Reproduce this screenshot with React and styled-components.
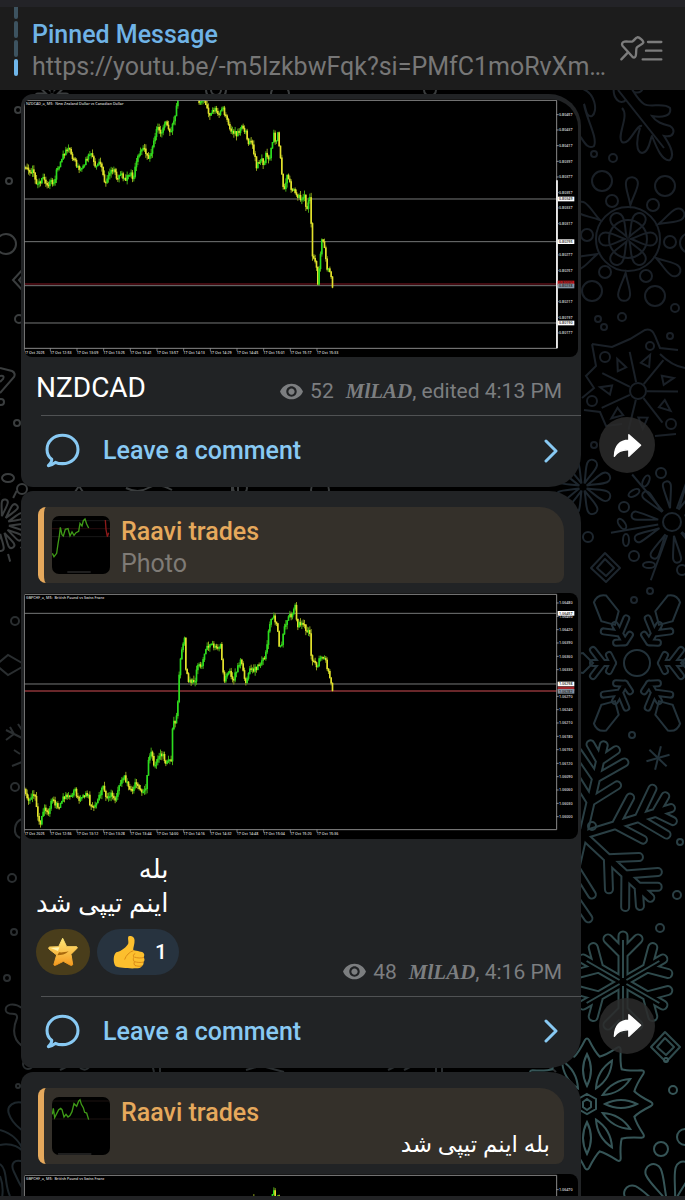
import React from 'react';
import styled, { createGlobalStyle } from 'styled-components';
import { MdVisibility } from 'react-icons/md';

const GlobalStyle = createGlobalStyle`
  * {
    box-sizing: border-box;
  }

  body {
    margin: 0;
    background: #000;
    font-family: Roboto, 'Noto Sans', 'DejaVu Sans', sans-serif;
  }

  button {
    font: inherit;
    border: 0;
    padding: 0;
    background: none;
    cursor: pointer;
  }
`;

// chart data: [x, y] turning points of the price
const nzdPath = [
  [72, 235], [100, 245], [110, 285], [130, 262], [145, 285], [152, 262],
  [160, 292], [170, 245], [190, 190], [208, 175], [220, 205], [240, 240],
  [255, 215], [275, 188], [285, 228], [302, 215], [315, 278], [330, 243],
  [345, 240], [352, 270], [365, 248], [375, 268], [395, 250], [400, 268],
  [412, 205], [432, 165], [443, 205], [455, 185], [472, 105], [482, 135],
  [495, 92], [512, 122], [525, 85], [534, 20], [560, -60], [590, -20],
  [597, 40], [612, 30], [630, 72], [645, 55], [660, 70], [668, 50],
  [690, 115], [710, 132], [725, 113], [738, 120], [745, 162], [755, 145],
  [770, 228], [785, 208], [790, 228], [800, 185], [808, 212], [822, 135],
  [828, 155], [835, 130], [852, 312], [862, 255], [875, 295], [905, 328],
  [915, 320], [920, 358], [931, 318], [937, 490], [950, 530], [952, 600],
  [959, 530], [965, 450], [972, 455], [980, 528], [992, 550], [998, 592],
];

const gbpPath = [
  [72, 625], [84, 665], [92, 648], [106, 650], [112, 700], [120, 732],
  [134, 682], [146, 695], [155, 658], [175, 682], [190, 648], [210, 650],
  [225, 630], [237, 660], [250, 642], [265, 645], [270, 675], [282, 682],
  [295, 655], [310, 618], [320, 650], [335, 640], [345, 662], [358, 620],
  [372, 583], [385, 620], [395, 632], [408, 610], [425, 635], [440, 620],
  [446, 535], [455, 510], [462, 555], [475, 535], [490, 518], [498, 552],
  [508, 530], [515, 538], [519, 420], [528, 432], [535, 350], [539, 265],
  [548, 195], [556, 175], [558, 265], [568, 305], [585, 305], [592, 248],
  [605, 262], [620, 200], [632, 188], [645, 200], [662, 195], [672, 300],
  [690, 272], [700, 302], [710, 270], [722, 240], [738, 305], [752, 260],
  [765, 268], [785, 250], [798, 220], [808, 135], [820, 110], [832, 130],
  [836, 190], [844, 202], [852, 150], [866, 110], [880, 100], [886, 75],
  [892, 135], [905, 128], [920, 148], [930, 160], [934, 230], [952, 262],
  [960, 232], [976, 235], [988, 285], [998, 332],
];

const gbpLatePath = [
  [72, 900], [700, 820], [750, 425], [758, 410], [766, 440], [808, 428],
  [818, 400], [824, 392], [828, 420], [834, 410], [838, 470], [998, 800],
];

const timeMarks = first => first.map((t, i) => [72 + i * 80 - (i ? 2 : 0), `17 Oct ${t}`]);

const nzdChart = {
  title: 'NZDCAD_o, M5:  New Zealand Dollar vs Canadian Dollar',
  box: '72 26 1662 775',
  top: 30,
  bottom: 774,
  path: nzdPath,
  lines: [326, 454, 586, 698],
  bid: 581,
  bidColor: '#5a1118',
  thickAxis: 270,
  marks: timeMarks(['2025', '12:53', '13:09', '13:25', '13:41', '13:57', '14:13', '14:29', '14:45', '15:01', '15:17', '15:33']),
  scale: [
    [73, '0.80457'], [119, '0.80437'], [166, '0.80417'], [213, '0.80397'],
    [260, '0.80377'], [307, '0.80357'], [353, '0.80337'], [400, '0.80317'],
    [494, '0.80277'], [541, '0.80257'], [634, '0.80217'], [681, '0.80197'],
    [728, '0.80177'],
  ],
  tags: [
    [326, '0.80349', '#fff'], [454, '0.80295', '#fff'], [578, '0.80241', '#c4161c'],
    [587, '0.80238', '#8291a0'], [698, '0.80190', '#fff'],
  ],
};

const gbpChart = {
  title: 'GBPCHF_o, M5:  British Pound vs Swiss Franc',
  box: '72 38 1662 736',
  top: 42,
  bottom: 748,
  path: gbpPath,
  lines: [99, 311],
  bid: 332,
  bidColor: '#8c3438',
  marks: timeMarks(['2025', '12:56', '13:12', '13:28', '13:44', '14:00', '14:16', '14:32', '14:48', '15:04', '15:20', '15:36']),
  scale: [
    [68, '1.06480'], [108, '1.06450'], [148, '1.06420'], [188, '1.06390'],
    [228, '1.06360'], [268, '1.06330'], [348, '1.06270'], [388, '1.06240'],
    [428, '1.06210'], [468, '1.06180'], [508, '1.06150'], [549, '1.06120'],
    [589, '1.06090'], [629, '1.06060'], [669, '1.06030'], [709, '1.06000'],
  ],
  tags: [
    [99, '1.06457', '#fff'], [311, '1.06298', '#fff'], [326, '', '#a3262b'],
    [333, '1.06282', '#8291a0'],
  ],
};

const gbpLateChart = {
  title: 'GBPCHF_o, M5:  British Pound vs Swiss Franc',
  box: '72 338 1662 736',
  top: 342,
  bottom: 1048,
  path: gbpLatePath,
  lines: [],
  marks: [],
  scale: [[385, '1.06470']],
  tags: [],
};

const noise = n => {
  const v = Math.sin(n * 12.9898) * 43758.5453;
  return v - Math.floor(v);
};

function priceAt(path, x) {
  const i = Math.max(1, path.findIndex(p => p[0] >= x));
  const [x0, y0] = path[i - 1];
  const [x1, y1] = path[i];
  return y0 + ((y1 - y0) * (x - x0)) / (x1 - x0);
}

function buildCandles(path) {
  const candles = [];
  let open = path[0][1];
  for (let x = path[0][0] + 2; x <= 998; x += 4) {
    const close = priceAt(path, x) + (noise(x) - 0.5) * 14;
    candles.push({
      x,
      up: close < open,
      y: Math.min(open, close) - 1,
      h: Math.max(3, Math.abs(close - open)) + 2,
      high: Math.min(open, close) - noise(x + 7) * 14,
      low: Math.max(open, close) + noise(x + 3) * 14,
    });
    open = close;
  }
  return candles;
}

function Chart({ chart }) {
  const { title, box, top, bottom, path, lines, bid, bidColor, thickAxis, marks, scale, tags } = chart;
  const clip = `plot-${top}`;
  return (
    <styles.Chart viewBox={box} role="img" aria-label={title}>
      <clipPath id={clip}>
        <rect x="73" y={top} width="1597" height={bottom - top} />
      </clipPath>
      <rect x="72" y={top - 4} width="1662" height="780" fill="#000" />
      {lines.map(y => (
        <line key={y} x1="73" x2="1670" y1={y} y2={y} stroke="#757777" strokeWidth="3" />
      ))}
      {bid && <line x1="73" x2="1670" y1={bid} y2={bid} stroke={bidColor} strokeWidth="4" />}
      <g clipPath={`url(#${clip})`}>
        {buildCandles(path).map(({ x, up, y, h, high, low }) => (
          <g key={x} fill={up ? '#2bdc1f' : '#e2e02c'}>
            <rect x={x - 2} y={high} width="3" height={low - high} fill={up ? '#44a812' : '#8fa31c'} />
            <rect x={x - 3} y={y} width="5" height={h} />
          </g>
        ))}
      </g>
      <path d={`M73 ${bottom} V${top} H1670 V${bottom} Z`} fill="none" stroke="#8a8a8a" strokeWidth="3" />
      {thickAxis && <path d={`M1671 ${thickAxis} V${bottom}`} stroke="#fff" strokeWidth="5" />}
      <styles.ChartText x="78" y={top + 13}>{title}</styles.ChartText>
      {marks.map(([x, label]) => (
        <g key={x}>
          <path d={`M${x + 1} ${bottom} v8`} stroke="#aaa" strokeWidth="2" />
          <styles.ChartText x={x} y={bottom + 17}>{label}</styles.ChartText>
        </g>
      ))}
      {scale.map(([y, label]) => (
        <g key={y}>
          <path d={`M1670 ${y} h6`} stroke="#ccc" strokeWidth="2" />
          <styles.ChartText x="1677" y={y + 4}>{label}</styles.ChartText>
        </g>
      ))}
      {tags.map(([y, label, color]) => (
        <g key={y}>
          <rect x="1673" y={y - 7} width="50" height="14" fill={color} />
          <styles.ChartText x="1677" y={y + 4} $color="#222">{label}</styles.ChartText>
        </g>
      ))}
    </styles.Chart>
  );
}

function Thumb({ late }) {
  return (
    <styles.Thumb viewBox="0 0 174 174" aria-hidden="true">
      <rect width="174" height="174" fill="#000" />
      {late ? (
        <g fill="none" strokeWidth="4">
          <path d="M0 12 H174 M0 66 H174" stroke="#2b1d1a" strokeWidth="2" />
          <path
            d="M1 52 L4 34 L8 62 L14 50 L20 38 L26 34 L30 38 L36 60 L42 52 L48 60 L54 56 L60 44 L66 20 L70 24 L74 28 L80 12 L84 8 L88 22 L94 32 L98 46 L104 48 L110 68"
            stroke="#3f9a17"
          />
          <path d="M18 171 H118" stroke="#2a2a2a" />
        </g>
      ) : (
        <g fill="none" strokeWidth="4">
          <path d="M0 14 H174 M0 62 H174" stroke="#242424" strokeWidth="2" />
          <path d="M0 38 H174" stroke="#3a1013" strokeWidth="2" />
          <path
            d="M1 112 L6 122 L14 112 L18 84 L22 60 L25 34 L30 56 L34 60 L40 40 L48 38 L54 60 L60 48 L66 58 L72 50 L80 46 L84 22 L90 30 L94 14 L99 9 L104 24 L110 36"
            stroke="#3f9a17"
          />
          <path d="M160 12 L162 40 L166 62 L170 50" stroke="#8c1a1a" />
          <path d="M46 168 H116" stroke="#2a2a2a" />
        </g>
      )}
    </styles.Thumb>
  );
}

function CommentIcon() {
  return (
    <svg width="35" height="35" viewBox="0 0 104 104" aria-hidden="true">
      <path
        d="M20 78 C10 71 6 60 6 49 C6 25 26 7 52 7 S98 25 98 49 S78 91 52 91 C44 91 37 90 31 87 C24 93 17 96 10 97 C17 90 21 85 20 78 Z"
        fill="none"
        stroke="#88c9f3"
        strokeWidth="9"
        strokeLinejoin="round"
      />
    </svg>
  );
}

function ChevronIcon() {
  return (
    <svg width="14" height="24" viewBox="0 0 14 24" aria-hidden="true">
      <path d="M2 2 L12 12 L2 22" fill="none" stroke="#88c9f3" strokeWidth="3" strokeLinecap="round" strokeLinejoin="round" />
    </svg>
  );
}

function ShareIcon() {
  return (
    <svg width="29" height="25" viewBox="0 0 88 76" aria-hidden="true">
      <path
        d="M48 5 L84 37 L48 71 V51 C28 50 14 56 4 71 C5 42 18 23 48 22 Z"
        fill="#fff"
        stroke="#fff"
        strokeWidth="4"
        strokeLinejoin="round"
      />
    </svg>
  );
}

function PinListIcon() {
  return (
    <svg width="62" height="45" viewBox="0 0 186 135" aria-hidden="true">
      <g fill="none" stroke="#7c7c7c" strokeWidth="7" strokeLinecap="round" strokeLinejoin="round">
        <path d="M34 100 L54 79" />
        <path d="M82 34 C87 32 101 45 100 50 C98 56 84 59 80 65 C77 71 80 82 77 90 C75 96 71 96 66 91 L38 60 C34 54 36 49 43 47 C51 45 62 49 68 46 C74 42 76 36 82 34 Z" />
        <path d="M114 48 H154 M108 74 H154 M98 100 H154" />
      </g>
    </svg>
  );
}

function StarEmoji() {
  return (
    <svg width="30" height="30" viewBox="0 0 90 90" aria-hidden="true">
      <defs>
        <linearGradient id="star" x1="0" y1="0" x2="0" y2="1">
          <stop offset="0" stopColor="#ffe878" />
          <stop offset="1" stopColor="#f39a1e" />
        </linearGradient>
      </defs>
      <path
        d="M44 4 L56 29 L86 29 C89 31 88 33 86 35 L69 52 L74 82 C73 86 71 86 68 85 L46 73 L22 85 C18 86 17 84 18 81 L26 54 L3 36 C1 33 2 31 5 30 L32 29 Z"
        fill="url(#star)"
        stroke="url(#star)"
        strokeWidth="3"
        strokeLinejoin="round"
      />
      <path d="M28 55 C40 55 52 52 62 43 C52 46 40 47 33 46 Z" fill="#a8690d" />
      <path d="M42 10 L34 31 L8 33 L30 42 Z" fill="#fff3b0" />
    </svg>
  );
}

function ThumbsUpEmoji() {
  return (
    <svg width="32" height="34" viewBox="0 0 98 104" aria-hidden="true">
      <path
        d="M48 4 C56 1 65 5 66 15 C67 27 61 39 62 46 C74 50 90 50 94 56 C98 62 94 66 94 69 C98 74 97 80 93 83 C95 88 92 94 88 95 C86 101 78 102 70 102 C50 103 20 101 8 96 C0 86 0 60 10 53 C26 50 44 34 47 25 C48 17 44 8 48 4 Z"
        fill="#fcbf2e"
      />
      <path
        d="M94 69 C86 71 74 71 67 68 M93 83 C84 85 74 84 67 82 M88 95 C80 97 72 95 68 93 M67 57 C62 59 61 64 64 68 C61 73 62 79 66 82 C63 87 64 91 68 94 M36 74 C40 62 50 52 62 48"
        fill="none"
        stroke="#d98a18"
        strokeWidth="3"
        strokeLinecap="round"
      />
    </svg>
  );
}

// wallpaper doodles
function Petals({ x, y, n, from, to, w, turn = 0 }) {
  const m = to - w / 2;
  return Array.from({ length: n }, (_, i) => (
    <path
      key={i}
      transform={`translate(${x} ${y}) rotate(${turn + (i * 360) / n})`}
      d={`M0 ${-from} C${w / 4} ${-(from + m) / 2} ${w / 2} ${-m + w / 2} ${w / 2} ${-m} A${w / 2} ${w / 2} 0 0 0 ${-w / 2} ${-m} C${-w / 2} ${-m + w / 2} ${-w / 4} ${-(from + m) / 2} 0 ${-from} Z`}
    />
  ));
}

function Circles({ list }) {
  return list.map(([x, y, r]) => <circle key={`${x}-${y}-${r}`} cx={x} cy={y} r={r} />);
}

function Arms({ x, y, d, n = 6, turn = 0, w = 6 }) {
  const arms = (
    <>
      {Array.from({ length: n }, (_, i) => (
        <path key={i} d={d} transform={`translate(${x} ${y}) rotate(${turn + (i * 360) / n})`} />
      ))}
    </>
  );
  return (
    <g strokeLinecap="round" strokeLinejoin="round">
      <g strokeWidth={w + 3}>{arms}</g>
      <g strokeWidth={w - 1} stroke="#000">{arms}</g>
    </g>
  );
}

function Spokes({ x, y, n, d, turn = 0 }) {
  return Array.from({ length: n }, (_, i) => (
    <path key={i} d={d} transform={`translate(${x} ${y}) rotate(${turn + (i * 360) / n})`} />
  ));
}

function Wallpaper() {
  return (
    <styles.Wallpaper viewBox="0 0 685 1200" preserveAspectRatio="xMaxYMin slice" aria-hidden="true">
      <g fill="none" stroke="#3a3d3e" strokeWidth="2">
        <Circles list={[[18, 110, 3], [9, 181, 3], [6, 244, 10], [19, 319, 4], [1, 402, 3], [17, 423, 3], [22, 489, 5]]} />
        <path d="M24 268 L13 280 L24 292 M24 274 L19 280 L24 286" />
        <path d="M0 368 L12 371 Q16 373 14 377 L0 393 M0 376 Q5 375 3 379 L0 382" />
        <Petals x={0} y={525} n={13} from={9} to={26} w={6} turn={12} />
        <Spokes x={0} y={525} n={13} d="M0 -30 V-38" turn={26} />
        <ellipse cx="8" cy="478" rx="6" ry="4" />
        <Arms x={52} y={96} n={8} d="M0 -4 V-14" w={4} />
        <Circles list={[[216, 90, 10], [216, 90, 5], [280, 94, 9], [430, 90, 6], [240, 488, 7], [320, 490, 9]]} />
        <path d="M75 492 l4 -6 l4 6 M126 488 q12 6 22 0 t24 2 M232 484 v8 M238 484 v8" />
      </g>
      <g fill="none" stroke="#2a2e30" strokeWidth="2">
        <Circles list={[[15, 621, 4], [15, 787, 4], [12, 878, 4], [14, 932, 3], [7, 978, 3], [18, 1086, 2], [28, 1064, 5]]} />
        <path d="M-4 665 L8 655 L22 663 L22 667 L8 675 Z" />
        <path d="M22 738 L6 730 M14 734 L10 727 M14 734 L6 740 M22 762 L12 766 M20 754 L14 750 M22 730 L18 724" />
        <path d="M22 819 C14 822 12 834 20 838" />
        <path d="M22 1008 C14 1002 4 1004 6 1011 C8 1017 18 1010 17 1018 C12 1030 14 1040 22 1046" />
        <path d="M60 1070 l8 -4 M80 1068 q6 4 10 -2 M152 1064 l2 8 M160 1064 v8 M246 1070 l20 -6 M262 1066 l22 6" />
        <path d="M388 1070 l8 -4 M404 1070 l12 -6 M436 1064 v8 M442 1064 v8 M530 1066 q20 -2 26 6" />
      </g>
      <g fill="none" stroke="#1d262b" strokeWidth="2">
        <path d="M24 1103 C14 1100 6 1106 9 1114 C12 1124 20 1128 24 1132 M0 1130 C14 1134 20 1142 24 1152 M0 1145 C10 1143 18 1146 24 1152" />
        <path d="M24 1162 C14 1158 10 1164 14 1172 C18 1180 20 1186 24 1190 M0 1164 C8 1170 4 1184 10 1196 M0 1176 Q4 1186 2 1198" />
      </g>
      <g fill="none" stroke="#1a2027" strokeWidth="2">
        {/* frosted twigs */}
        <path d="M580 88 C596 92 598 112 592 116 C586 118 586 108 584 104 C586 118 598 138 594 146 C588 150 584 142 580 136" />
        <path d="M614 86 C612 98 620 106 626 100 M622 108 C630 116 616 136 622 142 C630 146 636 124 642 126 M640 128 C636 140 636 152 642 153 C650 152 650 138 652 136 C656 146 662 162 670 160 C676 154 668 142 664 136 C674 138 676 130 670 126 C662 124 656 122 652 116 C662 118 672 116 670 108 C664 102 650 108 644 104 C638 100 634 92 630 86" />
        <path d="M618 90 L664 148 M634 92 C640 94 644 90 642 86" />
        {/* wheel */}
        <Circles
          list={[
            [628, 239, 32], [628, 239, 19], [602, 181, 10], [612, 201, 6],
            [665, 186, 10], [653, 205, 6], [587, 235, 6], [670, 242, 6],
            [605, 272, 6], [592, 291, 10], [646, 276, 6], [655, 296, 10],
            [690, 243, 10], [594, 154, 3], [613, 158, 4], [675, 308, 4],
            [622, 317, 4], [598, 319, 3], [604, 327, 3], [670, 336, 3],
          ]}
        />
        <Petals x={628} y={239} n={6} from={3} to={29} w={13} turn={30} />
        <Petals x={628} y={239} n={6} from={34} to={62} w={12} turn={4} />
        {/* jagged flake */}
        <path d="M592 344 L612 347 L630 339 L645 330 Q652 328 655 336 L660 348 L678 350 M592 344 L596 366 L586 376 L594 388 L582 398 M584 410 L600 412 L606 426 L622 424 M655 436 L676 434 M660 354 Q672 366 685 368" />
        <circle cx="638" cy="391" r="8" />
        <Spokes x={638} y={391} n={7} d="M0 -9 V-40" turn={-12} />
        <Spokes x={638} y={391} n={7} d="M-4 -28 L3 -38 L5 -26 Z" turn={14} />
        <Circles list={[[605, 357, 5], [650, 346, 4], [592, 401, 5], [671, 424, 5], [594, 445, 3]]} />
      </g>
      <g fill="none" stroke="#1d262e" strokeWidth="2">
        {/* bursts */}
        <Petals x={583} y={487} n={8} from={4} to={29} w={10} turn={22} />
        <circle cx="672" cy="522" r="9" />
        <Petals x={672} y={522} n={10} from={14} to={41} w={8} turn={-8} />
        <Spokes x={672} y={522} n={6} d="M0 -14 V-62" turn={-40} />
        <Circles list={[[661, 473, 5], [624, 507, 5], [634, 556, 5], [682, 570, 5], [588, 537, 5], [650, 591, 3], [634, 600, 3]]} />
        <ellipse cx="646" cy="481" rx="3" ry="6" transform="rotate(25 646 481)" />
        <ellipse cx="634" cy="493" rx="3" ry="6" transform="rotate(60 634 493)" />
        <ellipse cx="622" cy="524" rx="3" ry="6" transform="rotate(-35 622 524)" />
        <ellipse cx="626" cy="540" rx="3" ry="6" />
        <ellipse cx="649" cy="565" rx="6" ry="3" />
        <path d="M605 553 L620 568 L606 582 L591 568 Z M605 559 L614 568 L606 576 L597 568 Z" strokeLinejoin="round" />
      </g>
      <g fill="none" stroke="#23323a" strokeWidth="2">
        {/* ring flake */}
        <Arms x={637} y={663} turn={30} w={5} d="M0 -24 V-44 M0 -34 L-13 -44 M0 -34 L13 -44 M0 -24 L-8 -28 M0 -24 L8 -28" />
        <Spokes x={637} y={663} n={6} d="M0 -44 L-10 -54 L-7 -74 Q0 -80 7 -74 L10 -54 Z" turn={30} />
        <circle cx="637" cy="663" r="13" />
        <circle cx="632" cy="735" r="3" />
        <Spokes x={658} y={758} n={6} d="M0 0 V-12" turn={14} />
      </g>
      <g fill="none" stroke="#2a3f44" strokeWidth="2">
        {/* fir flake */}
        <Arms
          x={583}
          y={835}
          turn={13}
          w={7}
          d="M0 0 V-92 M0 -76 L-13 -90 M0 -76 L13 -90 M0 -58 L-24 -80 M0 -58 L24 -80 M0 -34 L-22 -56 M0 -34 L22 -56"
        />
        <Circles list={[[592, 826, 4], [677, 895, 4], [660, 928, 4], [680, 842, 3]]} />
      </g>
      <g fill="none" stroke="#2f4a4c" strokeWidth="2">
        {/* six-arm flake */}
        <Arms x={623} y={982} w={8} d="M0 0 V-46 M0 -28 L-15 -43 M0 -28 L15 -43" />
        <Spokes x={623} y={982} n={6} d="M0 -4 V-42" />
        <path d="M665 1032 L680 1047 L666 1062 L651 1047 Z M665 1038 L674 1047 L666 1055 L657 1047 Z" strokeLinejoin="round" />
      </g>
      <g fill="none" stroke="#365557" strokeWidth="2">
        {/* starflower */}
        <Spokes x={587} y={1104} n={12} d="M0 -18 Q-8 -34 0 -50 Q8 -34 0 -18 Z" turn={-30} />
        <Spokes x={587} y={1104} n={12} d="M-13 -47 Q-8 -52 -2 -64 Q0 -67 2 -64 Q8 -52 13 -47" turn={-30} />
        <path d="M587 1094 l9 5 v10 l-9 5 l-9 -5 v-10 Z M587 1099 l4 3 v5 l-4 3 l-4 -3 v-5 Z" />
        <Circles list={[[673, 1090, 4], [661, 1149, 7], [685, 1137, 8], [666, 1060, 2]]} />
        <Petals x={672} y={1212} n={9} from={12} to={52} w={16} turn={-25} />
      </g>
    </styles.Wallpaper>
  );
}

function Reply({ author, text, late, rtl }) {
  return (
    <styles.Reply type="button">
      <Thumb late={late} />
      <styles.ReplyBody>
        <styles.ReplyAuthor>{author}</styles.ReplyAuthor>
        <styles.ReplyText $rtl={rtl} dir={rtl ? 'rtl' : 'ltr'}>{text}</styles.ReplyText>
      </styles.ReplyBody>
    </styles.Reply>
  );
}

function Meta({ views, time }) {
  return (
    <styles.Meta>
      <MdVisibility size="25" aria-label="views" />
      <span>{views}</span>
      <styles.Signature>
        <b>MlLAD</b>, {time}
      </styles.Signature>
    </styles.Meta>
  );
}

function Message({ children, first }) {
  return (
    <styles.Message>
      <styles.Bubble $first={first}>
        {children}
        <styles.Comment type="button">
          <CommentIcon />
          <span>Leave a comment</span>
          <ChevronIcon />
        </styles.Comment>
      </styles.Bubble>
      <styles.Share type="button" aria-label="Share">
        <ShareIcon />
      </styles.Share>
    </styles.Message>
  );
}

function App() {
  return (
    <styles.Page>
      <GlobalStyle />
      <styles.Header>
        <styles.PinBars>
          <styles.PinBar />
          <styles.PinBar />
          <styles.PinBar />
          <styles.PinBar $active />
        </styles.PinBars>
        <styles.Pinned>
          <styles.PinnedTitle>Pinned Message</styles.PinnedTitle>
          <styles.PinnedText>https://youtu.be/-m5IzkbwFqk?si=PMfC1moRvXm…</styles.PinnedText>
        </styles.Pinned>
        <styles.PinButton type="button" aria-label="Pinned messages">
          <PinListIcon />
        </styles.PinButton>
      </styles.Header>

      <styles.Chat>
        <Wallpaper />
        <Message first>
          <styles.Media $first>
            <Chart chart={nzdChart} />
          </styles.Media>
          <styles.Caption>
            <styles.Text>NZDCAD</styles.Text>
            <Meta views={52} time="edited 4:13 PM" />
          </styles.Caption>
        </Message>

        <Message>
          <Reply author="Raavi trades" text="Photo" />
          <styles.Media>
            <Chart chart={gbpChart} />
          </styles.Media>
          <styles.Caption>
            <div>
              <styles.Persian dir="rtl" lang="fa">
                بله
                <br />
                اینم تیپی شد
              </styles.Persian>
              <styles.Reactions>
                <styles.Reaction type="button" $color="#493d1b" aria-label="Star">
                  <StarEmoji />
                </styles.Reaction>
                <styles.Reaction type="button" $color="#27333f" aria-label="Thumbs up, 1">
                  <ThumbsUpEmoji />
                  <span>1</span>
                </styles.Reaction>
              </styles.Reactions>
            </div>
            <Meta views={48} time="4:16 PM" />
          </styles.Caption>
        </Message>

        <styles.Message>
          <styles.Bubble>
            <Reply author="Raavi trades" text="بله اینم تیپی شد" late rtl />
            <styles.Media>
              <Chart chart={gbpLateChart} />
            </styles.Media>
          </styles.Bubble>
        </styles.Message>
      </styles.Chat>
      <styles.Footer />
    </styles.Page>
  );
}

const styles = {
  Page: styled.div`
    height: 100vh;
    display: flex;
    flex-direction: column;
    overflow: hidden;
  `,

  Header: styled.header`
    display: flex;
    align-items: center;
    flex-shrink: 0;
    height: 90px;
    padding: 0 13px 0 14px;
    border-top: 7px solid #232327;
    background: #1c1c1c;
  `,

  PinBars: styled.div`
    display: flex;
    flex-direction: column;
    align-self: flex-start;
    gap: 2px;
    width: 4px;
  `,

  PinBar: styled.span`
    height: 17px;
    border-radius: 2px;
    background: ${({ $active }) => ($active ? '#6fb6ea' : '#3d5360')};

    &:first-child {
      height: 12px;
      border-radius: 0 0 2px 2px;
    }
  `,

  Pinned: styled.div`
    flex: 1;
    min-width: 0;
    padding: 4px 0 0 14px;
  `,

  PinnedTitle: styled.div`
    color: #6fb3e6;
    font-size: 25px;
    font-weight: 500;
    line-height: 32px;
  `,

  PinnedText: styled.div`
    overflow: hidden;
    color: #777;
    font-size: 25px;
    line-height: 32px;
    white-space: nowrap;
  `,

  PinButton: styled.button`
    display: flex;
  `,

  Chat: styled.main`
    position: relative;
    display: flex;
    flex: 1;
    flex-direction: column;
    gap: 4px;
    min-height: 0;
    padding: 4px 30px 0 21px;
    overflow: hidden;
  `,

  Wallpaper: styled.svg`
    position: absolute;
    inset: -90px 0 0;
    width: 100%;
    height: 100vh;
  `,

  Message: styled.article`
    position: relative;
    display: flex;
    flex-shrink: 0;
    align-items: flex-end;
    gap: 18px;
    padding-right: 74px;

    &:has(> button) {
      padding-right: 0;
    }
  `,

  Bubble: styled.div`
    flex: 1;
    min-width: 0;
    overflow: hidden;
    padding-top: ${({ $first }) => ($first ? '5px' : '16px')};
    border-radius: 12px 32px 32px 12px;
    background: #212325;
  `,

  Media: styled.div`
    margin: 0 3px;
    overflow: hidden;
    border-radius: ${({ $first }) => ($first ? '8px 28px 8px 8px' : '4px 8px 8px 8px')};
  `,

  Chart: styled.svg`
    display: block;
    width: 100%;
  `,

  ChartText: styled.text`
    fill: ${({ $color }) => $color || '#d8d8d8'};
    font-family: 'Open Sans', sans-serif;
    font-size: 11px;
    font-weight: 600;
    white-space: pre;
  `,

  Reply: styled.button`
    display: flex;
    align-items: center;
    width: calc(100% - 34px);
    height: 76px;
    margin: 0 17px 10px;
    padding: 0 14px 0 8px;
    border-left: 6px solid #e6a95c;
    border-radius: 8px 24px 8px 8px;
    background: #34302a;
    text-align: left;
  `,

  Thumb: styled.svg`
    flex-shrink: 0;
    width: 58px;
    height: 58px;
    border-radius: 7px;
  `,

  ReplyBody: styled.span`
    display: flex;
    flex: 1;
    flex-direction: column;
    padding: 6px 0 0 11px;
  `,

  ReplyAuthor: styled.span`
    color: #e6a95c;
    font-size: 25px;
    font-weight: 500;
    line-height: 32px;
  `,

  ReplyText: styled.span`
    color: ${({ $rtl }) => ($rtl ? '#fff' : '#7f7b76')};
    font-size: ${({ $rtl }) => ($rtl ? '23px' : '25px')};
    line-height: 32px;
    text-align: ${({ $rtl }) => ($rtl ? 'right' : 'left')};
  `,

  Caption: styled.div`
    display: flex;
    align-items: flex-end;
    justify-content: space-between;
    padding: 13px 19px 10px 15px;
  `,

  Text: styled.p`
    margin: 0;
    color: #fff;
    font-size: 28px;
    line-height: 35px;
  `,

  Persian: styled.p`
    width: fit-content;
    margin: 0;
    color: #fff;
    font-size: 26px;
    line-height: 34px;
  `,

  Reactions: styled.div`
    display: flex;
    gap: 7px;
    padding: 9px 0 11px;
  `,

  Reaction: styled.button`
    display: flex;
    align-items: center;
    gap: 10px;
    height: 46px;
    padding: 0 12px;
    border-radius: 23px;
    background: ${({ $color }) => $color};
    color: #fff;
    font-size: 21px;
    font-weight: 500;

    &:last-child {
      padding-left: 16px;
    }
  `,

  Meta: styled.div`
    display: flex;
    align-items: center;
    gap: 6px;
    color: #7c7e80;
    font-size: 21px;
    line-height: 28px;
    white-space: nowrap;
  `,

  Signature: styled.span`
    padding-left: 6px;

    b {
      font-family: 'Liberation Serif', serif;
      font-style: italic;
    }
  `,

  Comment: styled.button`
    display: flex;
    align-items: center;
    width: calc(100% - 20px);
    height: 72px;
    margin-left: 20px;
    padding: 0 23px 2px 4px;
    border-top: 1px solid #505254;
    color: #88c9f3;
    font-size: 25px;
    font-weight: 500;

    span {
      flex: 1;
      padding-left: 23px;
      text-align: left;
    }
  `,

  Share: styled.button`
    display: flex;
    flex-shrink: 0;
    align-items: center;
    justify-content: center;
    width: 56px;
    height: 56px;
    margin-bottom: 14px;
    border-radius: 50%;
    background: rgba(44, 44, 44, 0.85);
  `,

  Footer: styled.div`
    flex-shrink: 0;
    height: 4px;
    background: #222325;
  `,
};

export default App;
